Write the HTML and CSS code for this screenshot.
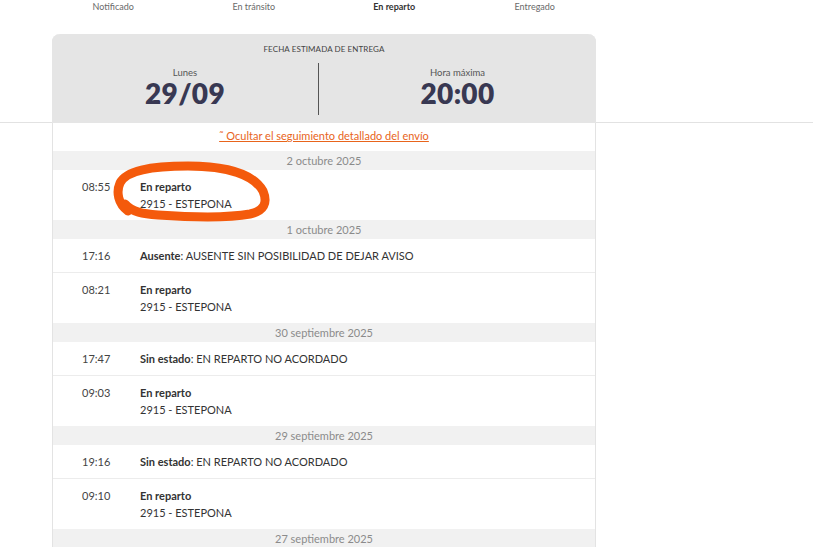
FILE: index.html
```html
<!DOCTYPE html>
<html lang="es">
<head>
<meta charset="utf-8">
<link rel="stylesheet" href="styles.css">
</head>
<body>
<div class="page">
  <div class="steps">
    <span class="step">Notificado</span>
    <span class="step">En tránsito</span>
    <span class="step active">En reparto</span>
    <span class="step">Entregado</span>
  </div>
  <div class="card">
    <div class="estimate">
      <div class="estimate-title">FECHA ESTIMADA DE ENTREGA</div>
      <div class="estimate-row">
        <div class="estimate-col">
          <div class="estimate-label">Lunes</div>
          <div class="estimate-value">29/09</div>
        </div>
        <div class="estimate-sep"></div>
        <div class="estimate-col">
          <div class="estimate-label">Hora máxima</div>
          <div class="estimate-value">20:00</div>
        </div>
      </div>
    </div>
    <div class="body">
      <div class="toggle"><a href="#" class="toggle-link">˜ Ocultar el seguimiento detallado del envío</a></div>

      <div class="date">2 octubre 2025</div>
      <div class="event highlighted">
        <div class="time">08:55</div>
        <div class="desc"><b>En reparto</b><br>2915 - ESTEPONA</div>
        <svg class="scribble" width="160" height="62" viewBox="0 0 160 62">
          <path d="M15 50 C 5 43, 3 31, 7 22 C 13 10, 36 5, 75 5 C 115 5, 141 14, 150 30 C 155 42, 151 50, 137 53 C 115 57, 75 56, 45 54 C 30 53, 19 51, 12 43" fill="none" stroke="#f45a0c" stroke-width="9" stroke-linecap="round" stroke-linejoin="round"/>
        </svg>
      </div>

      <div class="date">1 octubre 2025</div>
      <div class="event">
        <div class="time">17:16</div>
        <div class="desc"><b>Ausente</b>: AUSENTE SIN POSIBILIDAD DE DEJAR AVISO</div>
      </div>
      <div class="event">
        <div class="time">08:21</div>
        <div class="desc"><b>En reparto</b><br>2915 - ESTEPONA</div>
      </div>

      <div class="date">30 septiembre 2025</div>
      <div class="event">
        <div class="time">17:47</div>
        <div class="desc"><b>Sin estado</b>: EN REPARTO NO ACORDADO</div>
      </div>
      <div class="event">
        <div class="time">09:03</div>
        <div class="desc"><b>En reparto</b><br>2915 - ESTEPONA</div>
      </div>

      <div class="date">29 septiembre 2025</div>
      <div class="event">
        <div class="time">19:16</div>
        <div class="desc"><b>Sin estado</b>: EN REPARTO NO ACORDADO</div>
      </div>
      <div class="event">
        <div class="time">09:10</div>
        <div class="desc"><b>En reparto</b><br>2915 - ESTEPONA</div>
      </div>

      <div class="date">27 septiembre 2025</div>
    </div>
  </div>
</div>
</body>
</html>
```

FILE: styles.css
```css
* { box-sizing: border-box; }
html, body { margin: 0; padding: 0; }
body {
  font-family: Lato, "Open Sans", sans-serif;
  background: #fff linear-gradient(#e2e2e2, #e2e2e2) no-repeat 0 122px / 100% 1px;
  color: #333;
  height: 547px;
  overflow: hidden;
}
.page { padding-left: 43px; }
.steps {
  display: grid;
  grid-template-columns: repeat(4, 140.5px);
  height: 34px;
}
.step {
  text-align: center;
  font-size: 9px;
  line-height: 14px;
  color: #6a6a6a;
}
.step.active { font-weight: 700; color: #333; }

.card {
  margin-left: 9px;
  width: 544px;
  border-left: 1px solid #e3e3e3;
  border-right: 1px solid #e3e3e3;
  border-radius: 8px 8px 0 0;
  position: relative;
  background: #fff;
}
.estimate {
  background: #e5e5e5;
  border-radius: 8px 8px 0 0;
  padding: 9px 0 8px;
  height: 89px;
  margin: 0 -1px;
}
.estimate-title {
  text-align: center;
  font-size: 8px;
  line-height: 12px;
  color: #444;
  letter-spacing: 0.1px;
}
.estimate-row {
  display: grid;
  grid-template-columns: 266px 1px 1fr;
  margin-top: 8px;
}
.estimate-col { text-align: center; padding-top: 4px; }
.estimate-label { font-size: 9.5px; line-height: 12px; color: #555; }
.estimate-value {
  font-size: 28px;
  line-height: 28px;
  font-weight: 800;
  color: #383852;
  letter-spacing: 0.3px;
}
.estimate-sep { background: #555; height: 52px; }

.body { padding-top: 1px; }
.toggle {
  height: 27px;
  text-align: center;
  font-size: 11px;
  line-height: 23px;
}
.toggle-link { color: #e8641b; text-decoration: underline; text-underline-offset: 1px; }
.date {
  background: #f1f1f1;
  text-align: center;
  font-size: 11px;
  line-height: 19px;
  height: 19px;
  color: #8b8b8b;
}
.event {
  display: flex;
  padding: 8px 0 8px 29px;
  font-size: 11px;
  line-height: 17px;
  position: relative;
}
.event + .event { border-top: 1px solid #ececec; }
.time { width: 58px; color: #444; }
.desc { color: #333; }
.desc b { font-weight: 700; color: #333; }
.scribble {
  position: absolute;
  left: 60px;
  top: -9px;
  pointer-events: none;
}
```
